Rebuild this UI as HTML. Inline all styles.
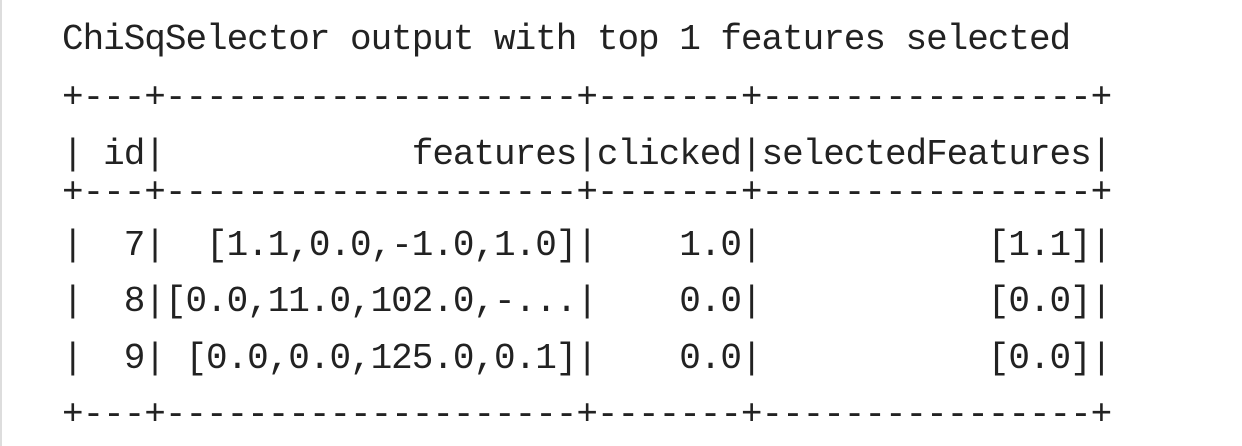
<!DOCTYPE html>
<html><head><style>
html,body{margin:0;padding:0;background:#fff;width:1242px;height:446px;overflow:hidden}
.edge{position:absolute;left:0;top:0;width:2px;height:446px;background:#ddd}
.l{position:absolute;left:62px;height:40px;line-height:40px;font-family:"Liberation Mono",monospace;font-size:36px;letter-spacing:-1.03px;color:#222;white-space:pre}
.b{margin-top:4px}
</style></head><body>
<div class="edge"></div>
<div class="l" style="top:20px">ChiSqSelector output with top 1 features selected</div>
<div class="l" style="top:78px">+---+--------------------+-------+----------------+</div>
<div class="l" style="top:135px">| id|            features|clicked|selectedFeatures|</div>
<div class="l" style="top:173px">+---+--------------------+-------+----------------+</div>
<div class="l" style="top:226px">|  7|  [1.1,0.0,-1.0,1.0]|    1.0|           [1.1]|</div>
<div class="l" style="top:282px">|  8|[0.0,11.0,102.0,-...|    0.0|           [0.0]|</div>
<div class="l" style="top:339px">|  9| [0.0,0.0,125.0,0.1]|    0.0|           [0.0]|</div>
<div class="l" style="top:395px">+---+--------------------+-------+----------------+</div>
</body></html>
